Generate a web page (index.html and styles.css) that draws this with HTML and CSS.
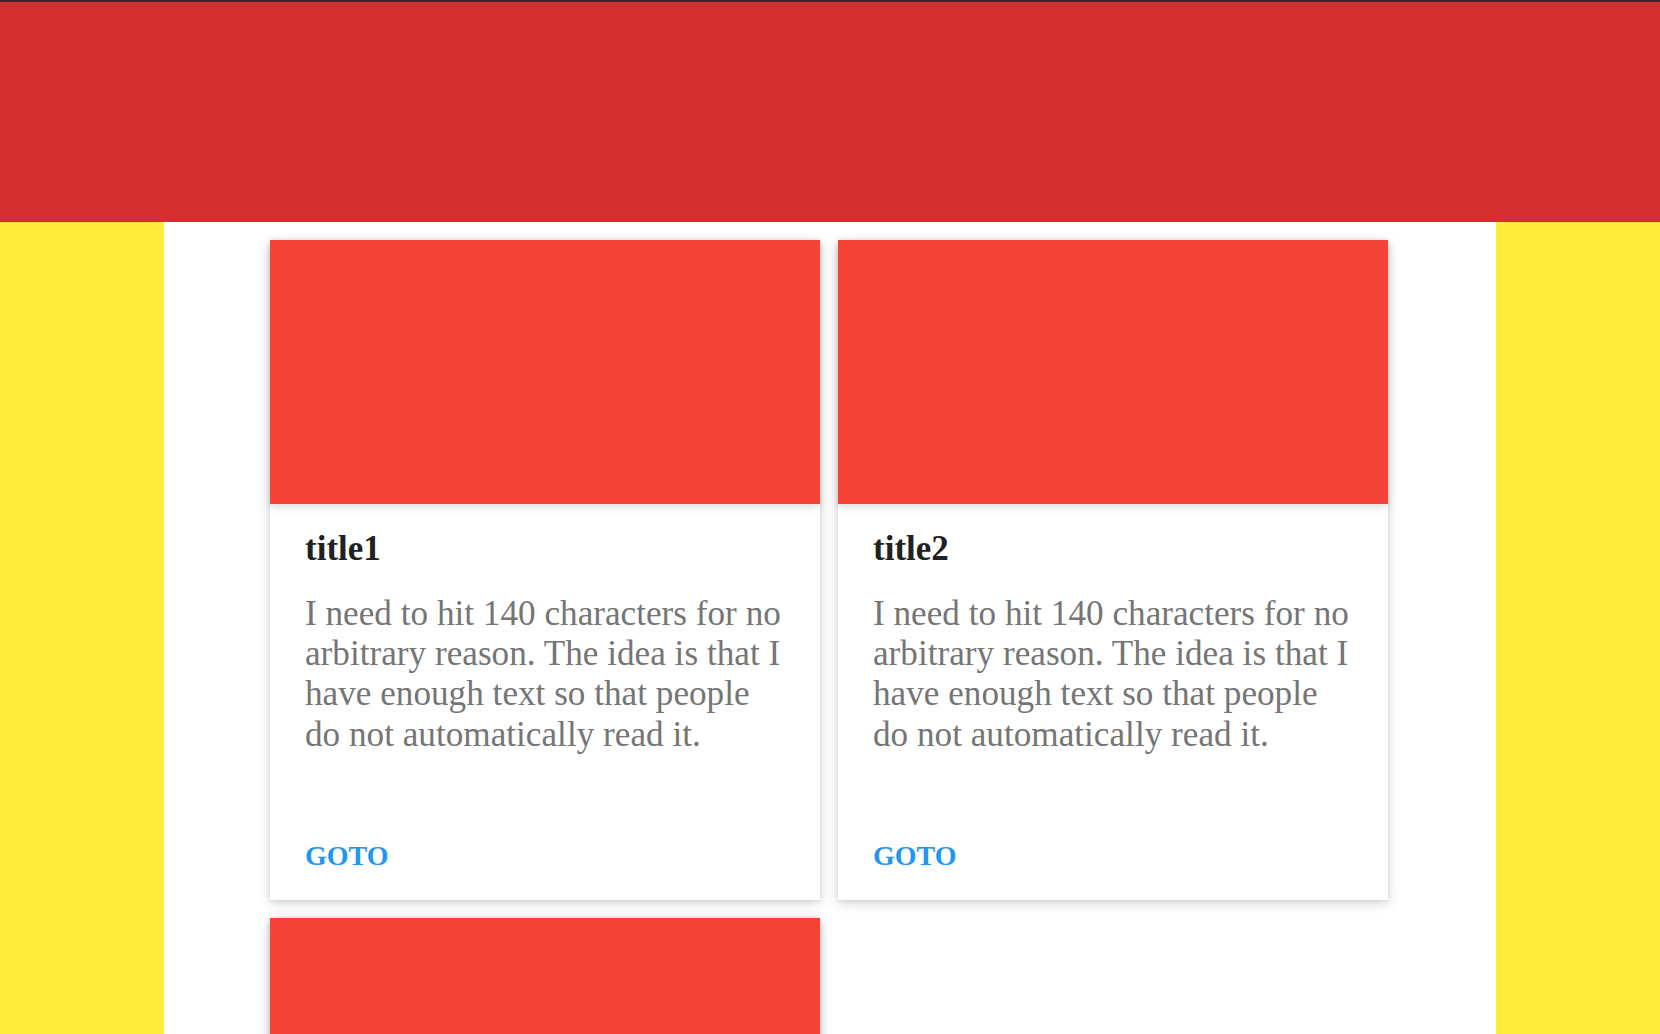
FILE: index.html
```html
<!DOCTYPE html>
<html>
<head>
<meta charset="utf-8">
<link rel="stylesheet" href="styles.css">
</head>
<body>
<div class="topline"></div>
<header class="header"></header>
<div class="layout">
  <aside class="side"></aside>
  <main class="main">
    <div class="grid">
      <article class="card">
        <div class="media"></div>
        <div class="content">
          <h2 class="title">title1</h2>
          <p class="text">I need to hit 140 characters for no arbitrary reason. The idea is that I have enough text so that people do not automatically read it.</p>
        </div>
        <div class="actions"><a class="action">Goto</a></div>
      </article>
      <article class="card">
        <div class="media"></div>
        <div class="content">
          <h2 class="title">title2</h2>
          <p class="text">I need to hit 140 characters for no arbitrary reason. The idea is that I have enough text so that people do not automatically read it.</p>
        </div>
        <div class="actions"><a class="action">Goto</a></div>
      </article>
      <article class="card">
        <div class="media"></div>
      </article>
    </div>
  </main>
  <aside class="side"></aside>
</div>
</body>
</html>
```

FILE: styles.css
```css
html, body {
  margin: 0;
  padding: 0;
  background: #ffffff;
  font-family: "Liberation Serif", "Times New Roman", serif;
}
.topline {
  height: 2px;
  background: #2b2b2b;
}
.header {
  height: 220px;
  background: #d32f2f;
}
.layout {
  display: flex;
  min-height: 900px;
}
.side {
  width: 164px;
  flex: none;
  background: #ffeb3b;
}
.main {
  flex: 1;
  background: #ffffff;
  padding: 18px 0 40px 106px;
}
.grid {
  display: grid;
  grid-template-columns: 550px 550px;
  gap: 18px;
}
.card {
  height: 660px;
  background: #ffffff;
  display: flex;
  flex-direction: column;
  box-shadow: 0 3px 12px rgba(0,0,0,0.16), 0 1px 4px rgba(0,0,0,0.10);
}
.media {
  height: 264px;
  flex: none;
  background: #f44336;
  position: relative;
  z-index: 1;
  box-shadow: 0 3px 8px rgba(0,0,0,0.14);
}
.content {
  padding: 25px 36px 0 35px;
}
.title {
  margin: 0;
  font-size: 35px;
  font-weight: bold;
  line-height: 39px;
  color: #212121;
}
.text {
  margin: 26px 0 0 0;
  font-size: 35.2px;
  line-height: 40.2px;
  color: #757575;
}
.actions {
  margin-top: auto;
  padding: 0 36px 29px 35px;
}
.action {
  display: block;
  font-size: 28px;
  line-height: 31px;
  font-weight: bold;
  text-transform: uppercase;
  color: #2196f3;
}
```
